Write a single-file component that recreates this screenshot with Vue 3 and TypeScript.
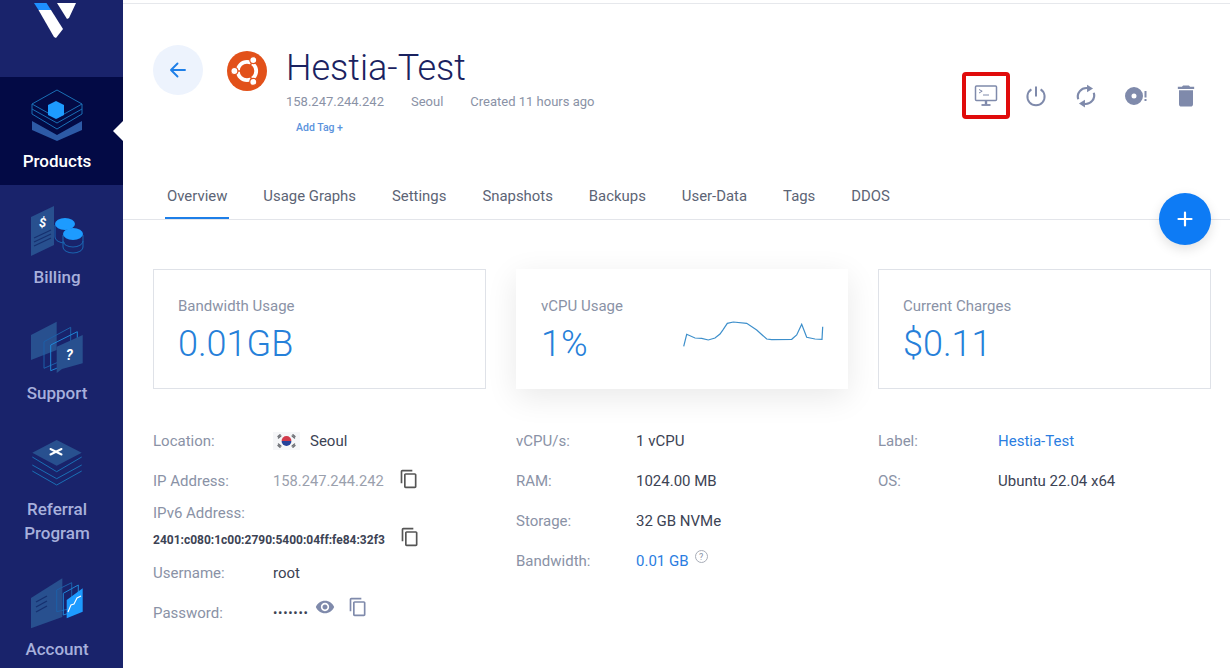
<script setup lang="ts">
const tabs: string[] = ['Overview', 'Usage Graphs', 'Settings', 'Snapshots', 'Backups', 'User-Data', 'Tags', 'DDOS']
const copyPath = 'M16 1H4c-1.1 0-2 .9-2 2v14h2V3h12V1zm3 4H8c-1.1 0-2 .9-2 2v14c0 1.1.9 2 2 2h11c1.1 0 2-.9 2-2V7c0-1.1-.9-2-2-2zm0 16H8V7h11v14z'
const eyePath = 'M12 4.5C7 4.5 2.73 7.61 1 12c1.73 4.39 6 7.5 11 7.5s9.27-3.11 11-7.5c-1.73-4.39-6-7.5-11-7.5zM12 17c-2.76 0-5-2.24-5-5s2.24-5 5-5 5 2.24 5 5-2.24 5-5 5zm0-8c-1.66 0-3 1.34-3 3s1.34 3 3 3 3-1.34 3-3-1.34-3-3-3z'
const trashPath = 'M6 19c0 1.1.9 2 2 2h8c1.1 0 2-.9 2-2V7H6v12zM19 4h-3.5l-1-1h-5l-1 1H5v2h14V4z'
const spark = '3.7,31.3 6.7,19.3 15,23 21.7,23.3 28.3,25 35,23 40,19 43.3,14.3 47.3,8.3 53.3,7 66.7,8.3 76.7,15 86.7,24 91.7,24.7 111.7,24.3 116.7,20 121.7,9.3 126.7,22.3 135,24 142,24.3 142.7,11.7'
</script>

<template>
  <div class="page">
    <aside class="sidebar">
      <div class="logo">
        <svg width="123" height="77" viewBox="0 0 123 77">
          <polygon points="34,3 46.5,3 51,10 38.5,10" fill="#1e8fff" />
          <polygon points="38.5,10 51,10 63,29 56,38 54,37" fill="#fff" />
          <polygon points="57,3 76,3 69,18 67,19" fill="#fff" />
        </svg>
      </div>
      <nav class="nav">
        <a class="item active">
          <span class="icon short">
            <svg width="60" height="60" viewBox="0 0 60 60">
              <polygon points="5,38 30,52 55,38 55,47 30,58 5,47" fill="#2d5aa6" />
              <g fill="none" stroke="#1a6fb5" stroke-width="1" stroke-linejoin="round">
                <polygon points="30,7 55,21 30,35 5,21" />
                <polyline points="5,21 5,26 30,40 55,26 55,21" />
                <polyline points="5,26 5,31 30,46 55,31 55,26" />
              </g>
              <polygon points="29,18 37,22 37,32 29,36 21,32 21,22" fill="#1d9bff" />
            </svg>
          </span>
          <span class="label">Products</span>
        </a>
        <a class="item">
          <span class="icon">
            <svg width="60" height="60" viewBox="0 0 60 60">
              <polygon points="4,22 27,11 27,50 4,61" fill="#28508f" />
              <text x="12" y="32" class="dollar">$</text>
              <g stroke="#16306f" stroke-width="1.2">
                <line x1="7" y1="43" x2="24" y2="35" />
                <line x1="7" y1="47" x2="24" y2="39" />
                <line x1="7" y1="51" x2="24" y2="43" />
              </g>
              <g fill="none" stroke="#1b62ad" stroke-width="1.1">
                <path d="M28,30v12c0,3 4,6 10,6" />
                <path d="M36,40v12c0,3 4,6 10,6s10-3 10-6V40" />
                <path d="M36,46c0,3 4,6 10,6s10-3 10-6" />
              </g>
              <ellipse cx="38" cy="29" rx="10" ry="6" fill="#1d9bff" />
              <ellipse cx="46" cy="39" rx="10" ry="6" fill="#1d9bff" />
            </svg>
          </span>
          <span class="label">Billing</span>
        </a>
        <a class="item">
          <span class="icon">
            <svg width="60" height="60" viewBox="0 0 60 60">
              <polygon points="4,24 29.7,10.7 29.7,39 4,49" fill="#28508f" />
              <polygon points="17,30.7 43.7,16.3 43.7,45.7 17,57.3" fill="none" stroke="#1d5fa8" stroke-width="1" />
              <polygon points="23.7,34 50.3,20.7 50.3,49 23.7,59.7" fill="none" stroke="#1f86d6" stroke-width="1" />
              <polygon points="29.7,35.7 55.7,24 55.7,52.3 35,58 29.7,62" fill="#28508f" />
              <text x="39" y="49" class="qmark">?</text>
            </svg>
          </span>
          <span class="label">Support</span>
        </a>
        <a class="item two">
          <span class="icon">
            <svg width="60" height="60" viewBox="0 0 60 60">
              <g fill="none" stroke="#1a6fb5" stroke-width="1" stroke-linejoin="round">
                <polyline points="5.3,30 29.7,44.7 54.7,30" />
                <polyline points="5.3,38 29.7,51.7 54.7,38" />
                <polyline points="5.3,44 29.7,58 54.7,44" />
              </g>
              <polygon points="29.7,13 54.7,25.7 29.7,38.7 5.3,25.7" fill="#28508f" />
              <g stroke="#fff" stroke-width="2" stroke-linecap="round">
                <line x1="23.5" y1="22" x2="34.5" y2="27.5" />
                <line x1="34.5" y1="22" x2="23.5" y2="27.5" />
              </g>
            </svg>
          </span>
          <span class="label">Referral Program</span>
        </a>
        <a class="item">
          <span class="icon">
            <svg width="60" height="60" viewBox="0 0 60 60">
              <polygon points="4,31 35.3,11.3 35.3,50 4,61.3" fill="#28508f" />
              <g stroke="#16306f" stroke-width="1.2">
                <line x1="9" y1="35" x2="20" y2="29" />
                <line x1="9" y1="40" x2="20" y2="34" />
                <line x1="9" y1="45" x2="20" y2="39" />
              </g>
              <polygon points="29.7,23 44.7,15.7 44.7,41.3 29.7,44.7" fill="none" stroke="#1d5fa8" stroke-width="1" />
              <polygon points="36.3,26.3 51.3,18 51.3,43 36.3,48" fill="none" stroke="#1f86d6" stroke-width="1" />
              <polygon points="39.7,33 55.7,21.3 55.7,44.7 39.7,51.3" fill="#1d9bff" />
              <polyline points="41,45 44,38 47,37 50,31 54,29" fill="none" stroke="#fff" stroke-width="1.1" />
            </svg>
          </span>
          <span class="label">Account</span>
        </a>
      </nav>
      <span class="pointer"></span>
    </aside>

    <main class="main">
      <header class="head">
        <div class="identity">
          <button class="back" aria-label="Back">
            <svg width="24" height="24" viewBox="0 0 24 24" fill="none" stroke="#1e7fe8" stroke-width="1.9" stroke-linecap="round" stroke-linejoin="round">
              <path d="M19 12H5.5M11.5 5.5 5 12l6.5 6.5" />
            </svg>
          </button>
          <svg class="os" width="40" height="40" viewBox="0 0 40 40">
            <circle cx="20" cy="20" r="20" fill="#e2511a" />
            <circle cx="20" cy="20" r="9.2" fill="none" stroke="#fff" stroke-width="3.8" />
            <g stroke="#e2511a" stroke-width="1.4">
              <line x1="9" y1="20" x2="14" y2="20" />
              <line x1="25.5" y1="10.5" x2="23" y2="14.8" />
              <line x1="25.5" y1="29.5" x2="23" y2="25.2" />
            </g>
            <circle cx="7.4" cy="20" r="3.5" fill="#fff" stroke="#e2511a" stroke-width="1.1" />
            <circle cx="26.3" cy="9.1" r="3.5" fill="#fff" stroke="#e2511a" stroke-width="1.1" />
            <circle cx="26.3" cy="30.9" r="3.5" fill="#fff" stroke="#e2511a" stroke-width="1.1" />
          </svg>
          <div class="titles">
            <h1>Hestia-Test</h1>
            <div class="meta">
              <span>158.247.244.242</span>
              <span>Seoul</span>
              <span>Created 11 hours ago</span>
            </div>
            <a class="tag">Add Tag +</a>
          </div>
        </div>
        <div class="actions">
          <span class="act console">
            <svg width="26" height="26" viewBox="0 0 26 26" fill="none" stroke="#7f8aab" stroke-width="1.5">
              <rect x="2.5" y="3" width="21" height="14.5" rx="1" />
              <path d="M6 6.5l3.2 1.7L6 10M10 12h6" stroke-width="1" />
              <path d="M13 17.5v4" stroke-width="2.4" />
              <path d="M8.5 22h9" stroke-width="1.8" />
            </svg>
          </span>
          <span class="act">
            <svg width="26" height="26" viewBox="0 0 26 26" fill="none" stroke="#7f8aab" stroke-width="2">
              <path d="M8.4 6.4a8.6 8.6 0 1 0 9.2 0" />
              <path d="M13 3.5v10" />
            </svg>
          </span>
          <span class="act">
            <svg width="26" height="26" viewBox="0 0 24 24" fill="none" stroke="#7f8aab" stroke-width="2">
              <path d="M4.8 15a8 8 0 0 1 8.7-10.3" />
              <path d="M19.2 9a8 8 0 0 1-8.7 10.3" />
              <polygon points="13,1.5 18.5,5 13,8.5" fill="#7f8aab" stroke="none" />
              <polygon points="11,15.5 5.5,19 11,22.5" fill="#7f8aab" stroke="none" />
            </svg>
          </span>
          <span class="act">
            <svg width="26" height="26" viewBox="0 0 26 26" fill="#7f8aab">
              <path fill-rule="evenodd" d="M11 4a9 9 0 1 1 0 18 9 9 0 0 1 0-18zm0 6.5a2.5 2.5 0 1 0 0 5 2.5 2.5 0 0 0 0-5z" />
              <rect x="21.5" y="8" width="2" height="6.5" />
              <rect x="21.5" y="16" width="2" height="2" />
            </svg>
          </span>
          <span class="act">
            <svg width="28" height="28" viewBox="0 0 24 24" fill="#7f8aab"><path :d="trashPath" /></svg>
          </span>
        </div>
      </header>

      <div class="tabs">
        <a v-for="(t, i) in tabs" :key="t" class="tab" :class="{ on: i === 0 }">{{ t }}</a>
        <button class="fab" aria-label="Add">
          <svg width="18" height="18" viewBox="0 0 18 18" stroke="#fff" stroke-width="2.2" stroke-linecap="round"><path d="M9 2.5v13M2.5 9h13" /></svg>
        </button>
      </div>

      <section class="cards">
        <div class="card">
          <div class="cap">Bandwidth Usage</div>
          <div class="val">0.01GB</div>
        </div>
        <div class="card raised">
          <div>
            <div class="cap">vCPU Usage</div>
            <div class="val">1%</div>
          </div>
          <svg class="chart" width="150" height="40" viewBox="0 0 150 40">
            <polyline :points="spark" fill="none" stroke="#3d8fcb" stroke-width="1.2" />
          </svg>
        </div>
        <div class="card">
          <div class="cap">Current Charges</div>
          <div class="val">$0.11</div>
        </div>
      </section>

      <section class="details">
        <div class="col">
          <div class="row">
            <span class="k">Location:</span>
            <span class="v flagged">
              <svg class="flag" width="27" height="18" viewBox="0 0 27 18">
                <rect width="27" height="18" fill="#f5f6f8" />
                <path d="M8.6 9a4.9 4.9 0 0 1 9.8 0z" fill="#d23a4b" />
                <path d="M8.6 9a4.9 4.9 0 0 0 9.8 0z" fill="#25429a" />
                <g stroke="#6d6f75" stroke-width="1.4" stroke-linecap="round">
                  <path d="M5 4.5l2-1.8M5.5 6l2.4-2M22 4.5l-2-1.8M21.5 6l-2.4-2M5 13.5l2 1.8M5.5 12l2.4 2M22 13.5l-2 1.8M21.5 12l-2.4 2" />
                </g>
              </svg>
              Seoul
            </span>
          </div>
          <div class="row">
            <span class="k">IP Address:</span>
            <span class="v muted">158.247.244.242</span>
            <svg class="copy" width="20" height="20" viewBox="0 0 24 24" fill="#555"><path :d="copyPath" /></svg>
          </div>
          <div class="stack">
            <span class="k">IPv6 Address:</span>
            <div class="ip6">
              <span>2401:c080:1c00:2790:5400:04ff:fe84:32f3</span>
              <svg class="copy" width="20" height="20" viewBox="0 0 24 24" fill="#555"><path :d="copyPath" /></svg>
            </div>
          </div>
          <div class="row">
            <span class="k">Username:</span>
            <span class="v">root</span>
          </div>
          <div class="row">
            <span class="k">Password:</span>
            <span class="v dots">•••••••</span>
            <svg class="eye" width="20" height="20" viewBox="0 0 24 24" fill="#7f8aab"><path :d="eyePath" /></svg>
            <svg class="copy2" width="20" height="20" viewBox="0 0 24 24" fill="#7f8aab"><path :d="copyPath" /></svg>
          </div>
        </div>
        <div class="col">
          <div class="row"><span class="k">vCPU/s:</span><span class="v">1 vCPU</span></div>
          <div class="row"><span class="k">RAM:</span><span class="v">1024.00 MB</span></div>
          <div class="row"><span class="k">Storage:</span><span class="v">32 GB NVMe</span></div>
          <div class="row">
            <span class="k">Bandwidth:</span>
            <span class="v link">0.01 GB</span>
            <span class="help">?</span>
          </div>
        </div>
        <div class="col">
          <div class="row"><span class="k">Label:</span><span class="v link">Hestia-Test</span></div>
          <div class="row"><span class="k">OS:</span><span class="v">Ubuntu 22.04 x64</span></div>
        </div>
      </section>
    </main>
  </div>
</template>

<style>
html, body { margin: 0; background: #fff; overflow: hidden; }
</style>

<style scoped>
* { box-sizing: border-box; }
.page {
  display: flex;
  width: 1230px;
  height: 668px;
  overflow: hidden;
  font-family: Roboto, "Liberation Sans", sans-serif;
  color: #3c4354;
  background: #fff;
}
.sidebar {
  position: relative;
  flex: 0 0 123px;
  background: #19236b;
  overflow: hidden;
}
.logo { height: 77px; }
.logo svg { display: block; }
.item {
  display: flex;
  flex-direction: column;
  align-items: center;
  padding-bottom: 12px;
  padding-right: 9px;
  color: #a7b0dc;
}
.item.active { background: #030a45; color: #fff; }
.icon {
  display: flex;
  align-items: center;
  justify-content: center;
  height: 80px;
}
.icon.short { height: 72px; }
.icon svg { overflow: visible; }
.label {
  width: 90px;
  font-size: 17px;
  font-weight: 500;
  line-height: 24px;
  text-align: center;
}
.dollar { font: italic 700 13px Roboto, sans-serif; fill: #fff; }
.qmark { font: italic 700 14px Roboto, sans-serif; fill: #fff; }
.pointer {
  position: absolute;
  left: 113px;
  top: 121px;
  width: 0;
  height: 0;
  border-top: 10px solid transparent;
  border-bottom: 10px solid transparent;
  border-right: 10px solid #fff;
}
.main {
  position: relative;
  flex: 1;
  min-width: 0;
  border-top: 1px solid #e6e8ec;
  margin-top: 3px;
}
.head {
  display: flex;
  justify-content: space-between;
  height: 172px;
  padding: 0 20px 0 30px;
}
.identity { display: flex; align-items: flex-start; padding-top: 41px; }
.back {
  display: flex;
  align-items: center;
  justify-content: center;
  width: 50px;
  height: 50px;
  border: 0;
  border-radius: 50%;
  background: #edf3fd;
  padding: 0;
}
.os { margin: 6px 0 0 24px; }
.titles { margin-left: 19px; }
h1 {
  margin: 0;
  font-size: 36px;
  font-weight: 300;
  line-height: 46px;
  color: #1a2260;
}
.meta {
  display: flex;
  gap: 27px;
  margin-top: 2px;
  font-size: 13px;
  line-height: 18px;
  color: #8a92a6;
}
.tag {
  display: block;
  margin: 10px 0 0 10px;
  font-size: 10.5px;
  font-weight: 500;
  line-height: 14px;
  color: #5b93dd;
}
.actions {
  display: flex;
  align-items: center;
  align-self: flex-start;
  margin-top: 68px;
  gap: 2px;
}
.act {
  display: flex;
  align-items: center;
  justify-content: center;
  width: 48px;
  height: 47px;
}
.console { border: 4px solid #e00b0b; border-radius: 4px; }
.tabs {
  position: relative;
  display: flex;
  gap: 36px;
  height: 44px;
  padding-left: 44px;
  border-bottom: 1px solid #e3e5ea;
}
.tab {
  position: relative;
  font-size: 14.9px;
  line-height: 40px;
  color: #5c6475;
}
.tab.on::after {
  content: "";
  position: absolute;
  left: -2px;
  right: -2px;
  bottom: 0;
  height: 2px;
  background: #1e7fe8;
}
.fab {
  position: absolute;
  right: 19px;
  top: 17px;
  display: flex;
  align-items: center;
  justify-content: center;
  width: 52px;
  height: 52px;
  border: 0;
  border-radius: 50%;
  background: #0d7bf5;
  box-shadow: 0 4px 12px rgba(0, 0, 0, 0.12);
  padding: 0;
}
.cards {
  display: grid;
  grid-template-columns: 333px 332px 333px;
  gap: 30px;
  padding: 49px 0 0 30px;
}
.card {
  display: flex;
  flex-direction: column;
  height: 120px;
  padding: 26px 0 0 24px;
  border: 1px solid #dfe2e8;
}
.raised {
  flex-direction: row;
  padding: 27px 0 0 25px;
  border: 0;
  box-shadow: 0 8px 30px rgba(0, 0, 0, 0.09);
}
.cap {
  font-size: 15px;
  line-height: 20px;
  color: #8a92a6;
}
.val {
  margin-top: 6px;
  font-size: 36px;
  font-weight: 300;
  line-height: 44px;
  color: #2680d9;
}
.chart { margin: 19px 18px 0 auto; }
.details {
  display: grid;
  grid-template-columns: 333px 332px 333px;
  gap: 30px;
  padding: 32px 0 0 30px;
}
.row {
  display: flex;
  align-items: center;
  height: 40px;
}
.k {
  flex: 0 0 120px;
  font-size: 15px;
  color: #8a92a6;
}
.v { font-size: 15px; color: #3c4354; }
.v.muted { font-size: 14.7px; color: #9aa0ad; }
.link { color: #2a7de1; }
.flagged { display: flex; align-items: center; gap: 10px; }
.stack {
  display: flex;
  flex-direction: column;
  justify-content: space-between;
  height: 52px;
  padding: 2px 0 3px;
}
.stack .k { line-height: 20px; flex: none; }
.ip6 {
  display: flex;
  align-items: center;
  height: 20px;
  font-size: 12px;
  font-weight: 700;
  color: #3c4354;
}
.copy { margin: -4px 0 0 15px; }
.ip6 .copy { margin: -6px 0 0 15px; }
.v.dots { position: relative; top: -1px; font-size: 13px; letter-spacing: 0.7px; }
.eye { position: relative; top: -6px; margin-left: 6px; }
.copy2 { position: relative; top: -6px; margin-left: 13px; }
.help {
  display: inline-flex;
  align-items: center;
  justify-content: center;
  width: 13px;
  height: 13px;
  margin: -9px 0 0 6px;
  border: 1px solid #a8adb8;
  border-radius: 50%;
  font-size: 9px;
  color: #8a92a6;
}
</style>
